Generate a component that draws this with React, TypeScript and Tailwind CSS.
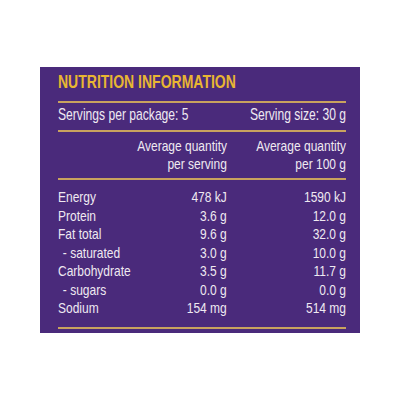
const rows = [
  { label: 'Energy', serving: '478 kJ', per100: '1590 kJ' },
  { label: 'Protein', serving: '3.6 g', per100: '12.0 g' },
  { label: 'Fat total', serving: '9.6 g', per100: '32.0 g' },
  { label: '- saturated', serving: '3.0 g', per100: '10.0 g', sub: true },
  { label: 'Carbohydrate', serving: '3.5 g', per100: '11.7 g' },
  { label: '- sugars', serving: '0.0 g', per100: '0.0 g', sub: true },
  { label: 'Sodium', serving: '154 mg', per100: '514 mg' },
];

function Rule() {
  return <div className="h-[2px] w-full bg-[#c9a25e]" />;
}

// the label face is a condensed one, so the panel body is squeezed horizontally
export default function App() {
  return (
    <div className="w-[400px] h-[400px] bg-white pt-[67px] pl-[40px] font-['Liberation_Sans','Arial',sans-serif]">
      <div className="w-[320px] h-[266px] bg-[#4a2a7b] pl-[18px] pt-[5px] text-[#efe9f1]">
        <div className="w-[360px] origin-left scale-x-[0.8]">
          <h1 className="text-[17.5px] leading-[20px] font-bold text-[#e8b632]">
            NUTRITION INFORMATION
          </h1>
          <div className="mt-[9px]">
            <Rule />
          </div>
          <div className="mt-[1px] flex justify-between text-[17px] leading-[22px]">
            <span className="inline-block origin-left scale-x-[0.89] whitespace-nowrap">Servings per package: 5</span>
            <span className="inline-block origin-right scale-x-[0.89] whitespace-nowrap">Serving size: 30 g</span>
          </div>
          <div className="mt-[4px]">
            <Rule />
          </div>
          <div className="mt-[5px] grid grid-cols-[1fr_112px_149px] text-[15px] leading-[18px]">
            <div />
            <div className="text-right whitespace-nowrap">
              Average quantity
              <br />
              per serving
            </div>
            <div className="text-right whitespace-nowrap">
              Average quantity
              <br />
              per 100 g
            </div>
          </div>
          <div className="mt-[5px]">
            <Rule />
          </div>
          <div className="mt-[8px] grid grid-cols-[1fr_112px_149px] text-[15px] leading-[18.5px]">
            {rows.map((row) => (
              <div key={row.label} className="contents">
                <div className={row.sub ? 'pl-[6px] whitespace-nowrap' : 'whitespace-nowrap'}>{row.label}</div>
                <div className="text-right whitespace-nowrap">{row.serving}</div>
                <div className="text-right whitespace-nowrap">{row.per100}</div>
              </div>
            ))}
          </div>
          <div className="mt-[9px]">
            <Rule />
          </div>
        </div>
      </div>
    </div>
  );
}
